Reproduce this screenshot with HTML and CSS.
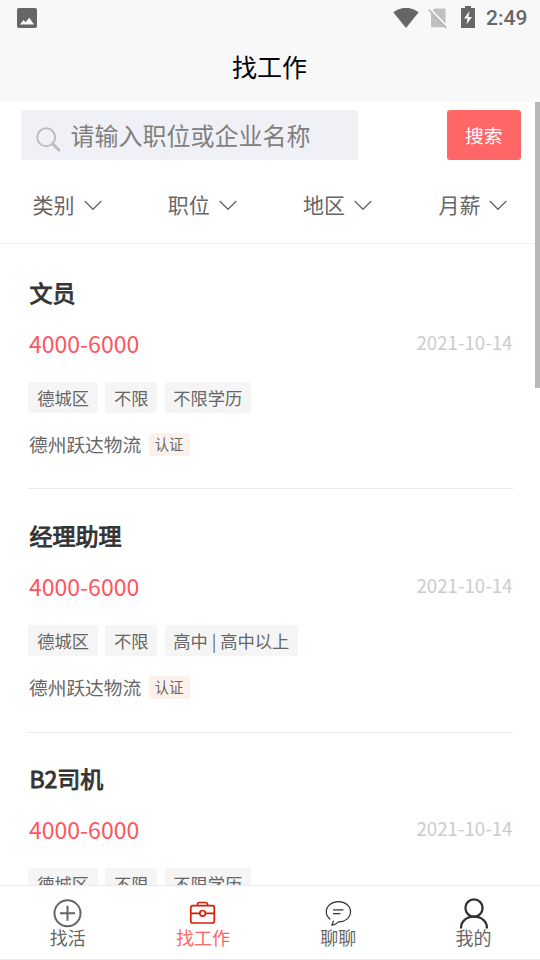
FILE: index.html
```html
<!DOCTYPE html>
<html lang="zh-CN">
<head>
<meta charset="utf-8">
<title>找工作</title>
<link rel="stylesheet" href="styles.css">
</head>
<body>
<div class="app">
  <header class="top">
    <div class="status">
      <svg class="status-photo" width="20" height="20" viewBox="0 0 20 20"><rect width="20" height="20" rx="2" fill="#666"/><path d="M3 16.500L6.500 12L8.500 14.200L12.300 9.800L17 16.500Z" fill="#f8f8f8"/></svg>
      <svg class="status-wifi" width="26" height="21" viewBox="0 0 26 21"><path d="M0.300 4.300Q13 -4.800 25.700 4.300L13 20Z" fill="#666"/></svg>
      <svg class="status-sim" width="20" height="21" viewBox="0 0 20 21"><path d="M6.500 .500H16.500Q17.500 .500 17.500 1.500V19.300H4Q3 19.300 3 18.300V4Z" fill="#c0c0c0"/><path d="M1 0L21 20.500" stroke="#f8f8f8" stroke-width="2"/><path d="M.500 1.500L18.500 20" stroke="#b5b5b5" stroke-width="1.500"/></svg>
      <svg class="status-battery" width="14" height="22" viewBox="0 0 14 22"><path d="M0 2H4V0H10V2H14V22H0Z" fill="#666"/><path d="M8.500 5L3 12.500H6.500L5.500 18.500L11 11H7.500Z" fill="#f8f8f8"/></svg>
      <span class="clock">2:49</span>
    </div>
    <h1 class="title">找工作</h1>
  </header>

  <main class="content">
    <div class="search">
      <div class="search-box">
        <svg width="26" height="26" viewBox="0 0 26 26" fill="none" stroke="#bdbdbd"><circle cx="10.200" cy="10.300" r="9" stroke-width="2"/><path d="M16.700 16.800L22.800 23" stroke-width="3" stroke-linecap="round"/></svg>
        <span class="placeholder">请输入职位或企业名称</span>
      </div>
      <button class="search-btn">搜索</button>
    </div>

    <nav class="filters">
      <div class="filter">类别<svg class="chevron" viewBox="0 0 18 11"><path d="M.700 1L9 9.300L17.300 1"/></svg></div>
      <div class="filter">职位<svg class="chevron" viewBox="0 0 18 11"><path d="M.700 1L9 9.300L17.300 1"/></svg></div>
      <div class="filter">地区<svg class="chevron" viewBox="0 0 18 11"><path d="M.700 1L9 9.300L17.300 1"/></svg></div>
      <div class="filter">月薪<svg class="chevron" viewBox="0 0 18 11"><path d="M.700 1L9 9.300L17.300 1"/></svg></div>
    </nav>

    <section class="jobs">
      <article class="job">
        <h2 class="job-name">文员</h2>
        <div class="job-pay"><span class="pay">4000-6000</span><span class="date">2021-10-14</span></div>
        <div class="tags"><span class="tag">德城区</span><span class="tag">不限</span><span class="tag">不限学历</span></div>
        <div class="company">德州跃达物流<span class="badge">认证</span></div>
      </article>
      <article class="job">
        <h2 class="job-name">经理助理</h2>
        <div class="job-pay"><span class="pay">4000-6000</span><span class="date">2021-10-14</span></div>
        <div class="tags"><span class="tag">德城区</span><span class="tag">不限</span><span class="tag">高中 | 高中以上</span></div>
        <div class="company">德州跃达物流<span class="badge">认证</span></div>
      </article>
      <article class="job">
        <h2 class="job-name">B2司机</h2>
        <div class="job-pay"><span class="pay">4000-6000</span><span class="date">2021-10-14</span></div>
        <div class="tags"><span class="tag">德城区</span><span class="tag">不限</span><span class="tag">不限学历</span></div>
        <div class="company">德州跃达物流<span class="badge">认证</span></div>
      </article>
    </section>
    <div class="scrollbar"></div>
  </main>

  <nav class="tabbar">
    <div class="tab">
      <svg width="36" height="32" viewBox="0 0 36 32" fill="none" stroke="#666"><circle cx="17.500" cy="16.300" r="13" stroke-width="2"/><path d="M10 16.300H25M17.500 8.800V23.800" stroke-width="2"/></svg>
      <span>找活</span>
    </div>
    <div class="tab active">
      <svg width="36" height="32" viewBox="0 0 36 32" fill="none" stroke="#d81e06" stroke-width="1.700"><rect x="5.800" y="8.700" width="23.500" height="17.300" rx="2"/><path d="M12.500 8.500V7.500Q12.500 5.500 14.500 5.500H20.500Q22.500 5.500 22.500 7.500V8.500M6 16.300H14.700M20.500 16.300H29"/><circle cx="17.600" cy="16.300" r="2.800"/></svg>
      <span>找工作</span>
    </div>
    <div class="tab">
      <svg width="36" height="32" viewBox="0 0 36 32" fill="none" stroke="#333" stroke-width="1.200" stroke-linejoin="round" stroke-linecap="round"><path d="M9.900 22C7.500 20 6.300 17.500 6.300 14.800C6.300 8.800 11.800 4.600 18.500 4.600C25.200 4.600 30.500 9 30.500 14.800C30.500 20.700 25 25 18.600 24.900C16.500 27 14.500 28 11.700 28.200C12.500 27 13.400 25.500 13.300 24"/><path d="M13.500 12.800H23M13.500 16.700H20"/></svg>
      <span>聊聊</span>
    </div>
    <div class="tab">
      <svg width="36" height="32" viewBox="0 0 36 32" fill="none" stroke="#333" stroke-width="2.300"><circle cx="18" cy="11" r="8.600"/><path d="M5.100 31.500V30.500C5.100 24.500 10.300 19.700 18 19.700C25.600 19.700 30.900 24.500 30.900 30.500V31.500"/></svg>
      <span>我的</span>
    </div>
  </nav>
</div>
</body>
</html>
```

FILE: styles.css
```css
* { box-sizing: border-box; }

body {
  margin: 0;
  background: #fff;
  font-family: "Noto Sans CJK SC", sans-serif;
}

.app {
  width: 540px;
  height: 960px;
  display: flex;
  flex-direction: column;
  overflow: hidden;
}

svg { display: block; flex: none; }

.top {
  flex: none;
  height: 102px;
  background: #f8f8f8;
}

.status {
  display: flex;
  align-items: center;
  height: 36px;
  padding: 0 12px 0 17px;
}

.status-wifi { margin-left: auto; }
.status-sim { margin-left: 9px; }
.status-battery { margin: -2px 0 0 13px; }

.clock {
  width: 42px;
  margin-left: 11px;
  color: #666;
  font: 500 21px/36px Roboto, sans-serif;
  white-space: nowrap;
}

.title {
  margin: 0 1px 0 0;
  font-size: 25px;
  line-height: 60px;
  font-weight: 400;
  text-align: center;
  color: #000;
}

.content {
  position: relative;
  flex: 1;
  min-height: 0;
  overflow: hidden;
}

.search {
  display: flex;
  justify-content: space-between;
  height: 67px;
  padding: 7.500px 19.500px 8px 21px;
}

.search-box {
  display: flex;
  width: 337.300px;
  height: 50.500px;
  padding-left: 15px;
  border-radius: 3px;
  background: #f0f1f6;
}

.search-box svg { margin-top: 17.500px; }

.placeholder {
  margin-left: 8.500px;
  font-size: 24px;
  line-height: 49px;
  color: #808080;
}

.search-btn {
  width: 73.500px;
  height: 50.500px;
  padding: 0;
  border: 0;
  border-radius: 3px;
  background: #f66;
  color: #fff;
  font: 18.720px/50px "Noto Sans CJK SC", sans-serif;
}

.filters {
  display: grid;
  grid-template-columns: repeat(4, 135.300px);
  height: 75px;
  border-bottom: 1px solid #f3f3f3;
}

.filter {
  display: flex;
  align-items: center;
  height: 70px;
  padding-left: 32.500px;
  font-size: 21px;
  color: #666;
}

.chevron {
  width: 18px;
  height: 11px;
  margin: 2px 0 0 9px;
  fill: none;
  stroke: #666;
  stroke-width: 1.300;
}

.jobs { padding: 2px 27.500px 0 28.400px; }

.job {
  height: 243px;
  padding-top: 29px;
  border-bottom: 1px solid #e9eaee;
}

.job:nth-child(2) { height: 244px; }
.job:nth-child(3) { padding-top: 28px; }

.job-name {
  margin: 0 0 0 1px;
  font-size: 23.040px;
  line-height: 34px;
  font-weight: 400;
  -webkit-text-stroke: .9px #333;
  color: #333;
}

.job-pay {
  display: flex;
  justify-content: space-between;
  height: 34px;
  margin: 17px 0 0 .6px;
  line-height: 34px;
}

.pay { font-size: 23.040px; color: #ff5560; }

.date {
  font-size: 18.720px;
  line-height: 32px;
  color: #ccc;
}

.tags {
  display: flex;
  gap: 7.300px;
  margin-top: 22px;
}

.tag {
  height: 30.500px;
  padding: 0 8.800px;
  border-radius: 3px;
  background: #f5f5f5;
  font-size: 17.280px;
  line-height: 32px;
  color: #666;
}

.company {
  display: flex;
  align-items: center;
  height: 30px;
  margin: 16px 0 0 .6px;
  font-size: 18.720px;
  color: #666;
}

.badge {
  height: 23px;
  margin: 1px 0 0 7.500px;
  padding: 0 6px;
  border-radius: 3px;
  background: #fdf2eb;
  font-size: 14.400px;
  line-height: 21px;
}

.scrollbar {
  position: absolute;
  top: 0;
  right: 0;
  width: 5px;
  height: 286px;
  background: #b8b8b8;
}

.tabbar {
  flex: none;
  display: grid;
  grid-template-columns: repeat(4, 135.300px);
  height: 75px;
  border-top: 1px solid #ebebeb;
  border-bottom: 1px solid #ebebeb;
}

.tab {
  display: flex;
  flex-direction: column;
  align-items: center;
  padding-top: 11px;
  color: #666;
  font-size: 18px;
  line-height: 16px;
}

.active { color: #f66; }
```
